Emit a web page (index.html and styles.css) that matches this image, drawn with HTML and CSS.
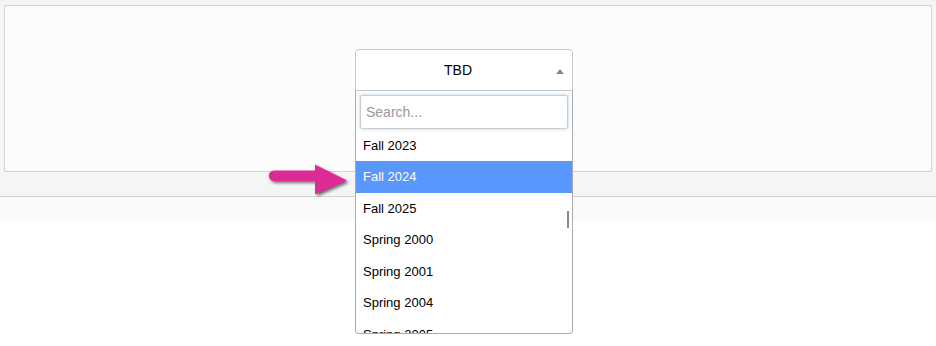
FILE: index.html
```html
<!DOCTYPE html>
<html lang="en">
<head>
  <meta charset="UTF-8">
  <meta name="viewport" content="width=device-width, initial-scale=1.0">
  <title>Term picker</title>
  <link rel="stylesheet" href="styles.css">
</head>
<body>
  <div class="toolbar">
    <div class="panel">
      <div class="select">
        <div class="selection">
          <span class="selected">TBD</span>
          <span class="caret"></span>
        </div>
        <div class="dropdown">
          <div class="search">
            <input type="text" class="search-field" placeholder="Search...">
          </div>
          <ul class="options">
            <li>Fall 2023</li>
            <li class="highlighted">Fall 2024</li>
            <li>Fall 2025</li>
            <li>Spring 2000</li>
            <li>Spring 2001</li>
            <li>Spring 2004</li>
            <li>Spring 2005</li>
          </ul>
          <div class="scroll-thumb"></div>
        </div>
      </div>
    </div>
  </div>
  <div class="subbar"></div>

  <!-- callout arrow pointing at the highlighted term -->
  <svg class="callout" width="96" height="44" viewBox="0 0 96 44">
    <path d="M12 12.5 H56 V23 H12 A5.25 5.25 0 0 1 12 12.5 Z" fill="#dc2a96"/>
    <polygon points="53,6.5 85,22.5 53,36.5" fill="#dc2a96"/>
  </svg>
</body>
</html>
```

FILE: styles.css
```css
html, body {
  height: 100%;
}
body {
  margin: 0;
  font-family: "Liberation Sans", Arial, sans-serif;
  background: #fff;
  color: #000;
}
.toolbar {
  background: #f5f5f5;
  padding: 5px 4px 24px;
  border-bottom: 1px solid #d4d4d4;
}
.panel {
  height: 165px;
  background: #fcfcfc;
  border: 1px solid #d4d4d4;
}
.subbar {
  height: 24px;
  background: #fafafa;
}
.select {
  position: relative;
  width: 218px;
  margin: 43px 0 0 350px;
}
.selection {
  position: relative;
  height: 42px;
  box-sizing: border-box;
  border: 1px solid #c8c8c8;
  border-radius: 4px 4px 0 0;
  background: #fff;
  padding: 0 20px 0 8px;
  display: flex;
  align-items: center;
  justify-content: center;
  font-size: 14px;
}
.caret {
  position: absolute;
  right: 8px;
  top: 19px;
  width: 0;
  height: 0;
  border-left: 4px solid transparent;
  border-right: 4px solid transparent;
  border-bottom: 5px solid #888;
}
.dropdown {
  position: absolute;
  top: 100%;
  left: 0;
  width: 218px;
  height: 243px;
  box-sizing: border-box;
  border: 1px solid #aaa;
  border-top: none;
  border-radius: 0 0 4px 4px;
  background: #fff;
  overflow: hidden;
  z-index: 2;
}
.search {
  padding: 4px 4px 0.5px;
}
.search-field {
  display: block;
  width: 100%;
  height: 34px;
  box-sizing: border-box;
  margin: 0;
  padding: 0 5px;
  border: 1px solid #ccc;
  border-radius: 3px;
  font-family: inherit;
  font-size: 14px;
  outline: none;
  box-shadow: 0 0 3px 1px rgba(150, 200, 240, 0.45);
}
.search-field::placeholder {
  color: #999;
}
.options {
  list-style: none;
  margin: 0;
  padding: 0;
}
.options li {
  height: 31.5px;
  line-height: 31.5px;
  padding: 0 7px;
  font-size: 13px;
}
.options .highlighted {
  background: #5897fb;
  color: #fff;
}
.scroll-thumb {
  position: absolute;
  right: 3px;
  top: 120px;
  width: 2px;
  height: 17px;
  background: linear-gradient(#9a7f90, #8a8a8a);
}
.callout {
  position: absolute;
  left: 262px;
  top: 158px;
  filter: drop-shadow(2px 2px 1.5px rgba(0, 0, 0, 0.55));
}
```
